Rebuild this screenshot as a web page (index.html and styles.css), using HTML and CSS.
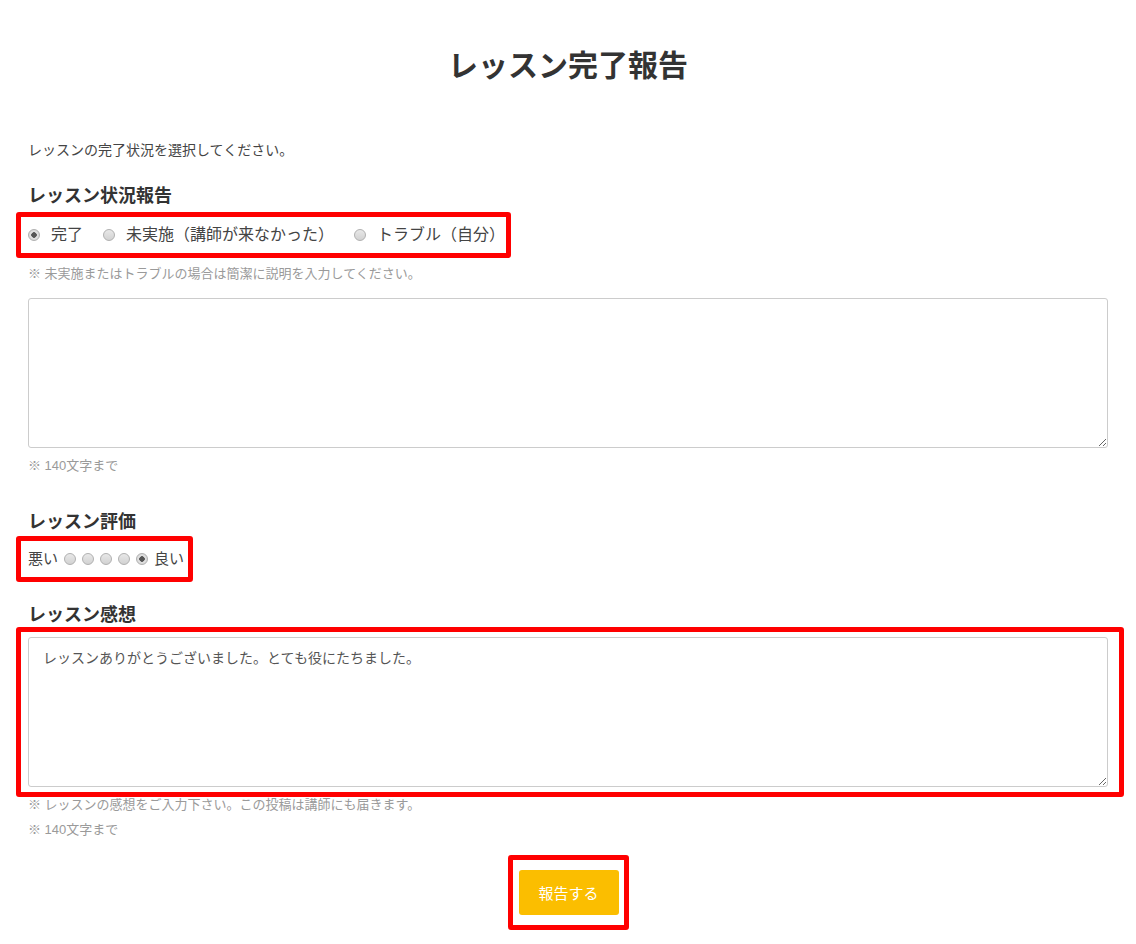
FILE: index.html
```html
<!DOCTYPE html>
<html>
<head>
    <title>レッスン完了報告</title>
    <link rel="stylesheet" href="styles.css">
</head>
<body>
    <div id="report">
        <h1>レッスン完了報告</h1>

        <p class="intro">レッスンの完了状況を選択してください。</p>

        <!-- 状況 -->
        <h2 class="label status-label">レッスン状況報告</h2>
        <div class="mark mark-status">
            <label class="option"><input type="radio" name="status" checked> 完了</label>
            <label class="option"><input type="radio" name="status"> 未実施（講師が来なかった）</label>
            <label class="option"><input type="radio" name="status"> トラブル（自分）</label>
        </div>
        <p class="note note-status">※ 未実施またはトラブルの場合は簡潔に説明を入力してください。</p>
        <textarea class="box box-status"></textarea>
        <p class="note note-limit">※ 140文字まで</p>

        <!-- 評価 -->
        <h2 class="label rating-label">レッスン評価</h2>
        <div class="mark mark-rating">
            <span>悪い</span>
            <input type="radio" name="rating">
            <input type="radio" name="rating">
            <input type="radio" name="rating">
            <input type="radio" name="rating">
            <input type="radio" name="rating" checked>
            <span>良い</span>
        </div>

        <!-- 感想 -->
        <h2 class="label comment-label">レッスン感想</h2>
        <div class="mark mark-comment">
            <textarea class="box">レッスンありがとうございました。とても役にたちました。</textarea>
        </div>
        <p class="note note-comment">※ レッスンの感想をご入力下さい。この投稿は講師にも届きます。</p>
        <p class="note note-limit2">※ 140文字まで</p>

        <div class="submit-row">
            <div class="mark mark-submit">
                <button type="button">報告する</button>
            </div>
        </div>
    </div>
</body>
</html>
```

FILE: styles.css
```css
/* 基本 */
body {
    margin: 0;
    background: #fff;
    color: #333;
    font-family: "Liberation Sans", "Noto Sans CJK JP", sans-serif;
}

#report {
    padding: 0 28px 20px;
}

h1 {
    margin: 46px 0 0;
    font-size: 30px;
    line-height: 40px;
    text-align: center;
    color: #333;
}

.intro {
    margin: 54px 0 0;
    font-size: 14px;
    line-height: 20px;
    color: #444;
}

.label {
    margin: 0;
    font-size: 18px;
    line-height: 24px;
    font-weight: bold;
    color: #333;
}

.status-label { margin-top: 24px; }
.rating-label { margin-top: 36px; }
.comment-label { margin-top: 21px; }

/* 赤枠 */
.mark {
    border: 5px solid #ff0000;
    border-radius: 3px;
    box-sizing: border-box;
}

.mark-status {
    display: inline-flex;
    align-items: center;
    gap: 20px;
    margin: 4px 0 0 -12px;
    padding: 8px 1px 8px 7px;
}

.option {
    display: flex;
    align-items: center;
    gap: 11px;
    font-size: 16px;
    line-height: 20px;
    color: #444;
}

.mark-rating {
    display: inline-flex;
    align-items: center;
    gap: 6px;
    margin: 2px 0 0 -12px;
    padding: 8px 4px 8px 7px;
    font-size: 15px;
    line-height: 20px;
    color: #444;
}

.mark-comment {
    margin: 0 -16px -2px -12px;
    padding: 5px 11px 5px 7px;
}

.mark-submit {
    display: inline-block;
    padding: 10px 5px 10px 6px;
}

/* ラジオ */
input[type="radio"] {
    appearance: none;
    -webkit-appearance: none;
    width: 12px;
    height: 12px;
    margin: 0;
    border: 1px solid #b0b0b0;
    border-radius: 50%;
    background: linear-gradient(#e8e8e8, #d2d2d2);
    box-sizing: border-box;
}

input[type="radio"]:checked {
    background: radial-gradient(circle, #555 0, #555 2.5px, #e2e2e2 3px, #d0d0d0 100%);
}

/* 注意書き */
.note {
    margin: 0;
    font-size: 13px;
    line-height: 16px;
    color: #9a9a9a;
}

.note-status { margin-top: 8px; }
.note-limit { margin-top: 10px; }
.note-comment { margin-top: 2px; }
.note-limit2 { margin-top: 9px; }

.box {
    display: block;
    width: 100%;
    height: 150px;
    margin: 0;
    padding: 10px 14px;
    border: 1px solid #cccccc;
    border-radius: 3px;
    box-sizing: border-box;
    font-family: "Liberation Sans", "Noto Sans CJK JP", sans-serif;
    font-size: 14px;
    line-height: 20px;
    color: #555;
    background: #fff;
}

.box-status {
    margin-top: 16px;
}

/* ボタン */
.submit-row {
    margin-top: 17px;
    text-align: center;
}

.submit-row button {
    display: block;
    width: 100px;
    height: 45px;
    border: none;
    border-radius: 3px;
    background-color: #fbbe00;
    color: #fff;
    font-family: "Liberation Sans", "Noto Sans CJK JP", sans-serif;
    font-size: 15px;
    cursor: pointer;
}
```
